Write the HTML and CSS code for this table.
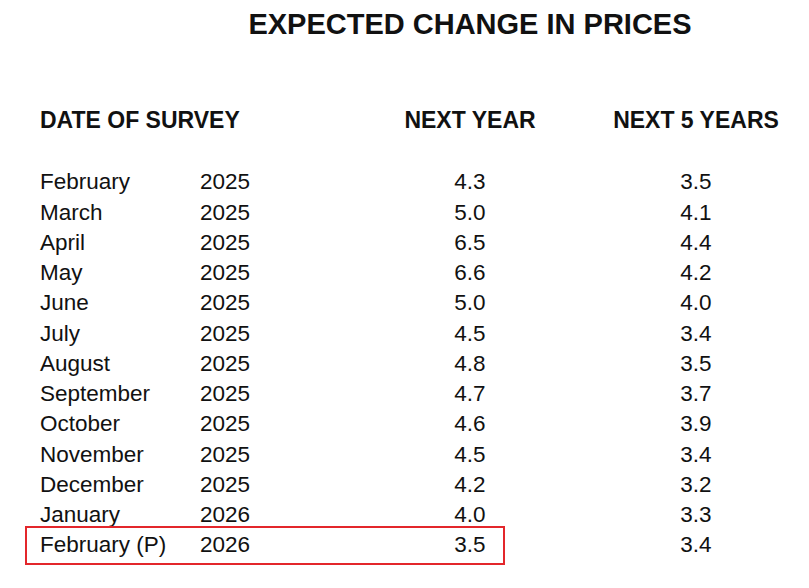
FILE: index.html
```html
<!DOCTYPE html>
<html lang="en">
<head>
<meta charset="utf-8">
<title>Expected Change in Prices</title>
<link rel="stylesheet" href="styles.css">
</head>
<body>
<main class="page">
  <h1 class="title">EXPECTED CHANGE IN PRICES</h1>
  <div class="table">
    <div class="row head">
      <div class="c-date">DATE OF SURVEY</div>
      <div class="c-year"></div>
      <div class="c-num">NEXT YEAR</div>
      <div class="c-num5">NEXT 5 YEARS</div>
    </div>
    <div class="body">
      <div class="row"><div class="c-date">February</div><div class="c-year">2025</div><div class="c-num">4.3</div><div class="c-num5">3.5</div></div>
      <div class="row"><div class="c-date">March</div><div class="c-year">2025</div><div class="c-num">5.0</div><div class="c-num5">4.1</div></div>
      <div class="row"><div class="c-date">April</div><div class="c-year">2025</div><div class="c-num">6.5</div><div class="c-num5">4.4</div></div>
      <div class="row"><div class="c-date">May</div><div class="c-year">2025</div><div class="c-num">6.6</div><div class="c-num5">4.2</div></div>
      <div class="row"><div class="c-date">June</div><div class="c-year">2025</div><div class="c-num">5.0</div><div class="c-num5">4.0</div></div>
      <div class="row"><div class="c-date">July</div><div class="c-year">2025</div><div class="c-num">4.5</div><div class="c-num5">3.4</div></div>
      <div class="row"><div class="c-date">August</div><div class="c-year">2025</div><div class="c-num">4.8</div><div class="c-num5">3.5</div></div>
      <div class="row"><div class="c-date">September</div><div class="c-year">2025</div><div class="c-num">4.7</div><div class="c-num5">3.7</div></div>
      <div class="row"><div class="c-date">October</div><div class="c-year">2025</div><div class="c-num">4.6</div><div class="c-num5">3.9</div></div>
      <div class="row"><div class="c-date">November</div><div class="c-year">2025</div><div class="c-num">4.5</div><div class="c-num5">3.4</div></div>
      <div class="row"><div class="c-date">December</div><div class="c-year">2025</div><div class="c-num">4.2</div><div class="c-num5">3.2</div></div>
      <div class="row"><div class="c-date">January</div><div class="c-year">2026</div><div class="c-num">4.0</div><div class="c-num5">3.3</div></div>
      <div class="row highlight"><div class="c-date">February (P)</div><div class="c-year">2026</div><div class="c-num">3.5</div><div class="c-num5">3.4</div></div>
    </div>
  </div>
</main>
</body>
</html>
```
FILE: styles.css
```css
* { box-sizing: border-box; }
html, body {
  margin: 0;
  padding: 0;
  background: #ffffff;
  overflow: hidden;
}
.page {
  font-family: "Liberation Sans", Arial, sans-serif;
  color: #111111;
  width: 809px;
  height: 588px;
}
.title {
  margin: 0;
  padding: 6px 0 0 131px;
  font-size: 29px;
  line-height: 36px;
  font-weight: bold;
  text-align: center;
  letter-spacing: 0;
}
.table {
  padding: 63px 0 0 40px;
}
.row {
  display: grid;
  grid-template-columns: 160px 160px 220px 226px;
  height: 30.25px;
  line-height: 30.25px;
  font-size: 22.5px;
  white-space: nowrap;
}
.row.head {
  font-size: 23px;
  font-weight: bold;
  margin-bottom: 32px;
}
.c-num { text-align: center; }
.c-num5 { text-align: center; padding-left: 6px; }
.highlight {
  position: relative;
}
.highlight::after {
  content: "";
  position: absolute;
  left: -15px;
  top: -4px;
  width: 476px;
  height: 35px;
  border: 2px solid #e3262b;
  pointer-events: none;
}
```
